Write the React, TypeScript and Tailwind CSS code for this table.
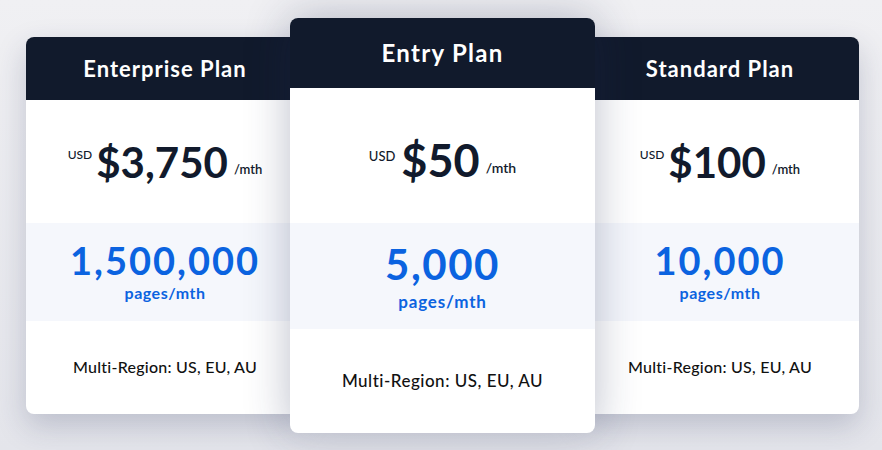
import React from "react";

// Pricing cards: two side plans and a raised middle plan
type Plan = {
  name: string;
  price: string;
  pages: string;
  region: string;
};

const plans: Plan[] = [
  { name: "Enterprise Plan", price: "$3,750", pages: "1,500,000", region: "Multi-Region: US, EU, AU" },
  { name: "Entry Plan", price: "$50", pages: "5,000", region: "Multi-Region: US, EU, AU" },
  { name: "Standard Plan", price: "$100", pages: "10,000", region: "Multi-Region: US, EU, AU" },
];

function SideCard({ plan }: { plan: Plan }) {
  return (
    <div className="flex flex-col w-[278px] h-[377px] bg-white rounded-[8px] overflow-hidden shadow-[0_12px_30px_rgba(40,50,90,0.22)]">
      <div className="h-[63px] shrink-0 bg-[#111a2c] flex items-center justify-center">
        <span className="text-white text-[22px] font-bold tracking-[1px]">{plan.name}</span>
      </div>
      <div className="h-[123px] shrink-0 flex items-center justify-center pt-[2px]">
        <span className="text-[12px] font-medium text-[#111a2c] self-start mt-[44px] mr-[4px]">USD</span>
        <span className="text-[42px] font-bold text-[#111a2c] leading-none">{plan.price}</span>
        <span className="text-[13px] font-semibold text-[#111a2c] self-end mb-[43px] ml-[6px]">/mth</span>
      </div>
      <div className="h-[98px] shrink-0 bg-[#f5f7fc] flex flex-col items-center pt-[16px]">
        <span className="text-[38px] font-bold text-[#0b63e0] leading-[42px] tracking-[2px]">{plan.pages}</span>
        <span className="text-[16px] font-bold text-[#0b63e0] leading-[20px] mt-[2px] tracking-[0.5px]">pages/mth</span>
      </div>
      <div className="flex-1 flex items-center justify-center">
        <span className="text-[16px] font-medium text-[#111] tracking-[0.25px]">{plan.region}</span>
      </div>
    </div>
  );
}

function MainCard({ plan }: { plan: Plan }) {
  return (
    <div className="relative z-10 -mx-[14px] flex flex-col w-[305px] h-[415px] bg-white rounded-[8px] overflow-hidden shadow-[0_0_45px_rgba(30,40,80,0.3)]">
      <div className="h-[70px] shrink-0 bg-[#111a2c] flex items-center justify-center">
        <span className="text-white text-[24px] font-bold tracking-[1.3px]">{plan.name}</span>
      </div>
      <div className="h-[135px] shrink-0 flex items-center justify-center pt-[10px]">
        <span className="text-[13px] font-medium text-[#111a2c] self-start mt-[49px] mr-[6px]">USD</span>
        <span className="text-[45px] font-bold text-[#111a2c] leading-none">{plan.price}</span>
        <span className="text-[14px] font-semibold text-[#111a2c] self-end mb-[45px] ml-[6px]">/mth</span>
      </div>
      <div className="h-[106px] shrink-0 bg-[#f5f7fc] flex flex-col items-center pt-[18px]">
        <span className="text-[42px] font-bold text-[#0b63e0] leading-[46px] tracking-[1.5px]">{plan.pages}</span>
        <span className="text-[17px] font-bold text-[#0b63e0] leading-[22px] mt-[4px] tracking-[0.8px]">pages/mth</span>
      </div>
      <div className="flex-1 flex items-center justify-center">
        <span className="text-[17px] font-medium text-[#111] tracking-[0.5px]">{plan.region}</span>
      </div>
    </div>
  );
}

export default function App() {
  return (
    <div className="w-[882px] h-[450px] overflow-hidden bg-gradient-to-b from-[#f0f0f3] to-[#e4e5eb] flex items-center pl-[26px] font-['Lato',sans-serif]">
      <SideCard plan={plans[0]} />
      <MainCard plan={plans[1]} />
      <SideCard plan={plans[2]} />
    </div>
  );
}
